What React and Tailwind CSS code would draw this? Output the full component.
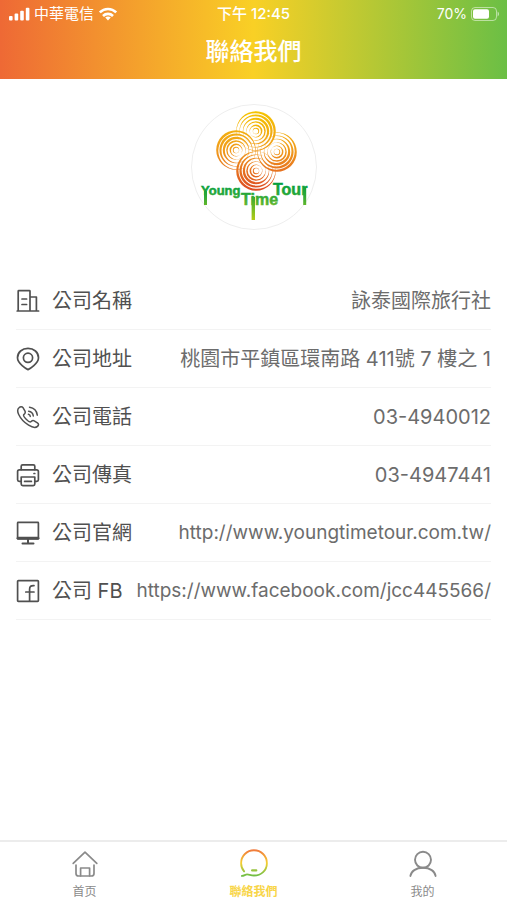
import React from 'react';

const iconProps = {
  viewBox: '0 0 24 24',
  fill: 'none',
  stroke: 'currentColor',
  strokeWidth: 1.7,
  strokeLinecap: 'round',
  strokeLinejoin: 'round',
  'aria-hidden': true,
};

function BuildingIcon() {
  return (
    <svg {...iconProps} className="w-6 h-6">
      <path d="M2.2 22V2.2Q2.2 1.6 2.8 1.6H13.4Q14 1.6 14 2.2V22M14 8H20.4V22M1.2 22H22.6" />
      <path d="M6 10H10.6M6 15.5H10.6" />
    </svg>
  );
}

function PinIcon() {
  return (
    <svg {...iconProps} className="w-6 h-6">
      <path d="M12 22.6C10.5 22 1.5 16.5 1.5 10.8C1.5 5.2 6.2 1.4 12 1.4S22.5 5.2 22.5 10.8C22.5 16.5 13.5 22 12 22.6Z" />
      <circle cx="12" cy="10.8" r="4.6" />
    </svg>
  );
}

function PhoneIcon() {
  return (
    <svg {...iconProps} strokeWidth={1.5} className="w-6 h-6">
      <path d="M3 2.7C4.3 1.5 6 1.2 7 2.7L9 6.2C9.8 7.7 8.7 8.8 7.8 9.6C7 10.4 8.6 12.6 10.2 14.2S14 17.4 14.9 16.7C15.8 15.9 16.8 15 18.2 15.8L21.4 17.8C23 18.9 22.7 20.3 21.5 21.4C19.4 23.3 16.2 22.4 12.6 20.2C7.8 17.2 4.4 13.1 2.7 9.5C1.3 6.5 1.3 4.2 3 2.7Z" />
      <path d="M12.6 6.2C15.3 6.5 17 8.3 17.3 11M13.5 2.2C18 2.8 20.8 5.8 21.3 10.2M12.4 9.3C13.6 9.5 14.2 10.2 14.3 11.4" />
    </svg>
  );
}

function PrinterIcon() {
  return (
    <svg {...iconProps} className="w-6 h-6">
      <path d="M5.2 6.6V3.2Q5.2 1.8 6.6 1.8H17.4Q18.8 1.8 18.8 3.2V6.6" />
      <path d="M5.2 18.4H3.2Q1.6 18.4 1.6 16.8V8.6Q1.6 6.8 3.4 6.8H20.6Q22.4 6.8 22.4 8.6V16.8Q22.4 18.4 20.8 18.4H18.8" />
      <path d="M5.2 14H18.8V21Q18.8 22.6 17.2 22.6H6.8Q5.2 22.6 5.2 21ZM8.6 18.4H15.4M18 10.5H18.8" />
    </svg>
  );
}

function MonitorIcon() {
  return (
    <svg {...iconProps} className="w-6 h-6">
      <rect x="1.6" y="1.4" width="20.8" height="16.6" rx="0.6" />
      <path d="M2 17.2H22" strokeWidth="2.8" />
      <path d="M12 18V22M6.5 22.4H17.5" strokeWidth="2" />
    </svg>
  );
}

function FacebookIcon() {
  return (
    <svg {...iconProps} className="w-6 h-6">
      <rect x="1.6" y="1.6" width="20.8" height="20.8" rx="0.8" />
      <path d="M13.6 22V10.2C13.6 7.4 15 6.4 18 6.6M9.8 13H18" />
    </svg>
  );
}

function HomeIcon() {
  return (
    <svg {...iconProps} viewBox="0 0 28 28" className="w-7 h-7">
      <path d="M2.2 14.4L14 3.2L25.8 14.4" />
      <path d="M5 16V24.4Q5 27 7.6 27H20.4Q23 27 23 24.4V16" />
      <path d="M9.6 26.8V19H18.6V26.8" />
    </svg>
  );
}

function ChatIcon() {
  return (
    <svg viewBox="0 0 30 30" fill="none" className="w-7 h-7" aria-hidden="true">
      <defs>
        <linearGradient id="chat" x1="0" y1="1" x2="0" y2="29" gradientUnits="userSpaceOnUse">
          <stop offset="0" stopColor="#f07a3c" />
          <stop offset="0.5" stopColor="#f6cf32" />
          <stop offset="1" stopColor="#6cbe45" />
        </linearGradient>
      </defs>
      <path
        d="M4.4 24C2.4 21.6 1.2 18.6 1.2 15.2C1.2 7.4 7.4 1.4 15 1.4S28.8 7.4 28.8 15.2C28.8 23 22.6 28.4 15 28.4C11.8 28.4 9.6 27.2 7.6 27.2S4.4 28.8 2 28.8"
        stroke="url(#chat)"
        strokeWidth="2"
        strokeLinecap="round"
      />
      <path d="M13 23H17.4" stroke="#98c33f" strokeWidth="2.4" strokeLinecap="round" />
    </svg>
  );
}

function UserIcon() {
  return (
    <svg {...iconProps} strokeWidth={1.9} viewBox="0 0 28 28" className="w-7 h-7">
      <circle cx="14" cy="10.8" r="8" />
      <path d="M1.4 27C2 22.2 7 18.8 14 18.8S26 22.2 26.6 27" />
    </svg>
  );
}

// centre of each petal and the angle its rings are heaviest at
const petals = [
  { cx: 65, cy: 27, angle: -35 },
  { cx: 45, cy: 46, angle: -135 },
  { cx: 86, cy: 48, angle: 45 },
  { cx: 65, cy: 67, angle: 145 },
];

const rings = [19.8, 16.6, 13.2, 9.8, 6.4, 3.2];

function ringPath({ cx, cy, angle }, r) {
  const rad = (angle * Math.PI) / 180;
  const shift = r > 12 ? 1.15 : r > 6 ? 0.75 : 0.45;
  const inner = r - shift - 0.15;
  const ix = cx - Math.cos(rad) * shift;
  const iy = cy - Math.sin(rad) * shift;
  const circle = (x, y, q) => `M${x - q} ${y}a${q} ${q} 0 1 0 ${q * 2} 0a${q} ${q} 0 1 0 ${-q * 2} 0Z`;
  return circle(cx, cy, r) + circle(ix, iy, inner);
}

function Logo() {
  return (
    <svg
      viewBox="0 0 126 126"
      className="w-[126px] h-[126px]"
      role="img"
      aria-label="Young Time Tour"
      fontFamily='"Liberation Sans", sans-serif'
      fontWeight="700"
    >
      <defs>
        <linearGradient id="petal" x1="0" y1="7" x2="0" y2="87" gradientUnits="userSpaceOnUse">
          <stop offset="0" stopColor="#f5c400" />
          <stop offset="0.5" stopColor="#f09a1d" />
          <stop offset="1" stopColor="#dc4a22" />
        </linearGradient>
        <linearGradient id="letters" x1="0" y1="78" x2="0" y2="116" gradientUnits="userSpaceOnUse">
          <stop offset="0" stopColor="#009e3f" />
          <stop offset="0.35" stopColor="#2ba838" />
          <stop offset="1" stopColor="#b4cc15" />
        </linearGradient>
      </defs>
      <circle cx="63" cy="63" r="62.5" fill="#fff" stroke="#eeeeee" />
      <g fill="url(#petal)" fillRule="evenodd">
        {petals.map((petal) => rings.map((r) => <path key={`${petal.cx}-${petal.cy}-${r}`} d={ringPath(petal, r)} />))}
      </g>
      <g fill="url(#letters)" stroke="url(#letters)" strokeWidth="0.5">
        <text x="10" y="91" fontSize="13">Young</text>
        <text x="50" y="101" fontSize="16">Time</text>
        <text x="82" y="91" fontSize="16">Tour</text>
      </g>
      <path d="M13 87H16V101H13ZM60.6 93H64V116H60.6ZM112.2 83H115.2V101H112.2Z" fill="url(#letters)" />
    </svg>
  );
}

function StatusBar() {
  return (
    <div className="grid grid-cols-3 items-center h-7 px-2 text-[15px] leading-7">
      <div className="flex items-center gap-1">
        <svg viewBox="0 0 22 14" className="w-[22px] h-3.5" fill="currentColor" aria-hidden="true">
          <rect x="1" y="9" width="3.6" height="4.4" rx="1" />
          <rect x="6.6" y="6.6" width="3.6" height="6.8" rx="1" />
          <rect x="12.2" y="3.8" width="3.6" height="9.6" rx="1" />
          <rect x="17.8" y="0.8" width="3.6" height="12.6" rx="1" />
        </svg>
        <span>中華電信</span>
        <svg viewBox="0 0 20 14" className="w-5 h-3.5" fill="none" stroke="currentColor" strokeWidth="2.6" aria-hidden="true">
          <path d="M1.8 5.4C6.4 0.8 13.6 0.8 18.2 5.4M5 9C7.8 6.2 12.2 6.2 15 9" />
          <path d="M10 13.4L7.2 10.6C8.8 9.2 11.2 9.2 12.8 10.6Z" fill="currentColor" stroke="none" />
        </svg>
      </div>
      <span className="text-center font-medium">下午 12:45</span>
      <div className="flex items-center justify-end gap-1">
        <span className="text-sm leading-7">70%</span>
        <svg viewBox="0 0 28 14" className="w-7 h-3.5" aria-hidden="true">
          <rect x="0.5" y="0.5" width="25" height="13" rx="3.5" fill="none" stroke="#fff" strokeOpacity="0.5" />
          <rect x="2" y="2.2" width="16" height="9.6" rx="2" fill="#fff" />
          <path d="M26.6 4.6C28.4 5.6 28.4 8.4 26.6 9.4Z" fill="#fff" fillOpacity="0.6" />
        </svg>
      </div>
    </div>
  );
}

const contacts = [
  { label: '公司名稱', value: '詠泰國際旅行社', Icon: BuildingIcon },
  { label: '公司地址', value: '桃園市平鎮區環南路 411號 7 樓之 1', Icon: PinIcon },
  { label: '公司電話', value: '03-4940012', Icon: PhoneIcon },
  { label: '公司傳真', value: '03-4947441', Icon: PrinterIcon },
  { label: '公司官網', value: 'http://www.youngtimetour.com.tw/', href: 'http://www.youngtimetour.com.tw/', Icon: MonitorIcon },
  { label: '公司 FB', value: 'https://www.facebook.com/jcc445566/', href: 'https://www.facebook.com/jcc445566/', Icon: FacebookIcon },
];

const tabs = [
  { label: '首页', Icon: HomeIcon },
  { label: '聯絡我們', Icon: ChatIcon, active: true },
  { label: '我的', Icon: UserIcon },
];

export default function App() {
  return (
    <div className="min-h-screen flex flex-col bg-white font-[Inter,'Noto_Sans_CJK_TC',sans-serif]">
      {/* Header */}
      <header className="pb-1 bg-linear-[90deg,#ee6935,#f9d025_50%,#6bbf45] text-white">
        <StatusBar />
        <h1 className="h-[47px] text-2xl leading-[48px] font-medium text-center">聯絡我們</h1>
      </header>

      <main className="flex-1">
        <div className="flex justify-center pt-[25px] pb-[42px]">
          <Logo />
        </div>

        {/* Contact rows */}
        <dl className="px-4">
          {contacts.map(({ label, value, href, Icon }) => (
            <div key={label} className="flex items-center justify-between h-[58px] border-b border-[#f3f3f3] text-xl whitespace-nowrap">
              <dt className="flex items-center gap-3 text-[#505050]">
                <Icon />
                {label}
              </dt>
              <dd className="text-[#6c6c6c]">{href ? <a href={href} className="text-[19px]">{value}</a> : value}</dd>
            </div>
          ))}
        </dl>
      </main>

      {/* Tab bar */}
      <nav className="grid grid-cols-3 h-[60px] border-t-2 border-[#ececec]">
        {tabs.map(({ label, Icon, active }) => (
          <button
            key={label}
            type="button"
            aria-current={active ? 'page' : undefined}
            className={`flex flex-col items-center pt-[7px] gap-[5px] text-xs leading-5 ${active ? 'text-[#f8d548] font-bold' : 'text-[#8a8a8a]'}`}
          >
            <Icon />
            {label}
          </button>
        ))}
      </nav>
    </div>
  );
}
